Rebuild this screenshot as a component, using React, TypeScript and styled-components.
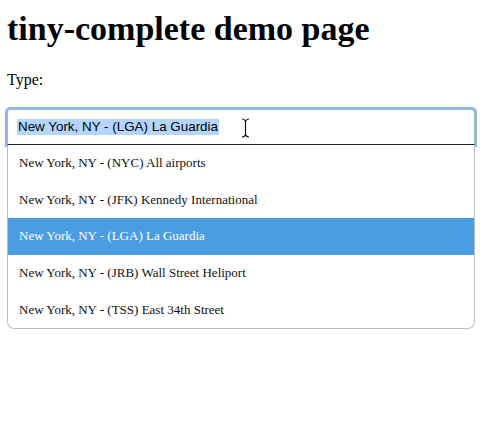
import React from "react";
import styled, { createGlobalStyle } from "styled-components";

const Global = createGlobalStyle`
  html, body { margin: 0; padding: 0; background: #fff; }
  body { padding: 8px 7px 0 7px; font-family: "Liberation Serif", "Times New Roman", serif; color: #000; }
`;

const Title = styled.h1`
  margin: 1px 0 0 0;
  font-size: 34px;
  line-height: 39px;
  font-weight: bold;
`;

const Label = styled.p`
  margin: 23px 0 0 0;
  font-size: 16px;
  line-height: 18px;
`;

const Combo = styled.div`
  position: relative;
  margin-top: 20px;
  width: 468px;
`;

const Field = styled.div`
  position: relative;
  height: 36px;
  box-sizing: border-box;
  border: 1px solid #9bb;
  border-bottom: 1px solid #222;
  border-radius: 3px 3px 0 0;
  box-shadow: 0 0 0 2px #8cb9f2;
  display: flex;
  align-items: center;
  padding: 0 9px;
  font-family: "Liberation Sans", Arial, sans-serif;
  font-size: 13.4px;
  background: #fff;
`;

const Selected = styled.span`
  background: #b4d5fe;
  line-height: 16px;
  padding: 0 1px;
`;

const Cursor = styled.svg`
  position: absolute;
  left: 233px;
  top: 8px;
`;

const List = styled.ul`
  position: relative;
  z-index: 1;
  list-style: none;
  margin: 0;
  padding: 0;
  background: #fff;
  border: 1px solid #bbb;
  border-top: none;
  border-radius: 0 0 8px 8px;
  overflow: hidden;
  box-shadow: 0 1px 1px rgba(0,0,0,0.08);
`;

const Item = styled.li<{ $active?: boolean }>`
  height: 36.6px;
  display: flex;
  align-items: center;
  padding: 0 11px;
  font-size: 13px;
  background: ${(p) => (p.$active ? "#4a9de0" : "#fff")};
  color: ${(p) => (p.$active ? "#fff" : "#111")};
`;

const items = [
  "New York, NY - (NYC) All airports",
  "New York, NY - (JFK) Kennedy International",
  "New York, NY - (LGA) La Guardia",
  "New York, NY - (JRB) Wall Street Heliport",
  "New York, NY - (TSS) East 34th Street",
];

export default function App() {
  return (
    <>
      <Global />
      <Title>tiny-complete demo page</Title>
      <Label>Type:</Label>
      <Combo>
        <Field>
          <Selected>New York, NY - (LGA) La Guardia</Selected>
          <Cursor width="9" height="20" viewBox="0 0 9 20">
            <path d="M1 1 Q4.5 1.5 4.5 4 L4.5 16 Q4.5 18.5 1 19 M8 1 Q4.5 1.5 4.5 4 M4.5 16 Q4.5 18.5 8 19" stroke="#111" strokeWidth="1.2" fill="none" />
          </Cursor>
        </Field>
        <List>
          {items.map((t, i) => (
            <Item key={t} $active={i === 2}>
              {t}
            </Item>
          ))}
        </List>
      </Combo>
    </>
  );
}
